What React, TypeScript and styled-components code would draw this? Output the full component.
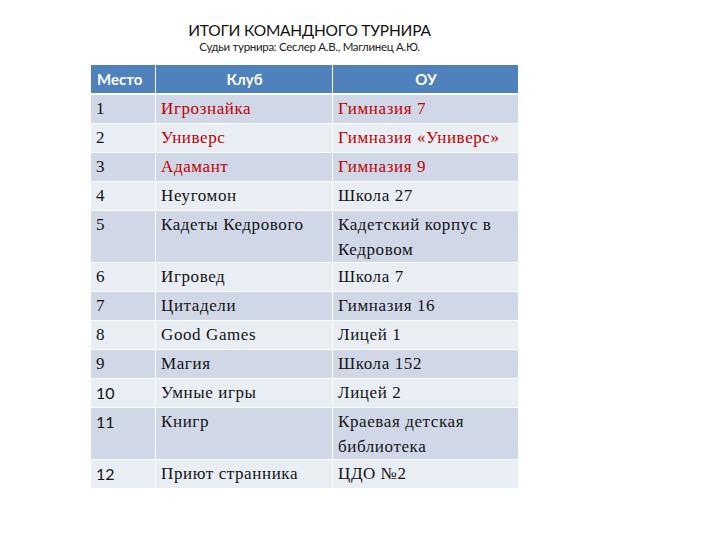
import React from "react";
import styled, { createGlobalStyle } from "styled-components";

const Global = createGlobalStyle`
  html, body { margin: 0; padding: 0; background: #ffffff; }
  body { font-family: "Liberation Serif", serif; }
`;

const Page = styled.div`
  width: 720px;
  height: 540px;
  box-sizing: border-box;
  padding: 20px 0 0 91px;
`;

const Sheet = styled.div`
  width: 427px;
  display: flex;
  flex-direction: column;
`;

const Heading = styled.div`
  display: flex;
  flex-direction: column;
  align-items: center;
  padding-left: 10px;
  margin-bottom: 11px;
`;

const Title = styled.div`
  font-family: Lato, "Open Sans", sans-serif;
  font-size: 15.5px;
  line-height: 20px;
  color: #111;
  letter-spacing: -0.2px;
`;

const Subtitle = styled.div`
  font-family: Lato, "Open Sans", sans-serif;
  font-size: 11.5px;
  line-height: 14px;
  color: #222;
  letter-spacing: -0.3px;
`;

const Table = styled.div`
  display: grid;
  grid-template-columns: 64px 176px 185px;
  row-gap: 1px;
  column-gap: 1px;
  background: #ffffff;
`;

const HeadCell = styled.div<{ $align: "left" | "center" }>`
  background: #4f81bd;
  color: #ffffff;
  font-family: Lato, "Open Sans", sans-serif;
  font-weight: 700;
  font-size: 15px;
  height: 28px;
  line-height: 28px;
  padding: 0 5px 0 6px;
  text-align: ${(p) => p.$align};
  margin-bottom: 1px;
`;

const Cell = styled.div<{ $odd: boolean; $red?: boolean; $sans?: boolean }>`
  background: ${(p) => (p.$odd ? "#d0d8e8" : "#e9edf4")};
  color: ${(p) => (p.$red ? "#c00000" : "#141414")};
  font-family: ${(p) => (p.$sans ? 'Lato, "Open Sans", sans-serif' : '"Liberation Serif", serif')};
  font-size: ${(p) => (p.$sans ? "16px" : "17px")};
  letter-spacing: ${(p) => (p.$sans ? "0" : "0.6px")};
  line-height: 25px;
  min-height: 28px;
  padding: 1px 4px 0 5px;
  box-sizing: border-box;
`;

const rows: [string, string, string][] = [
  ["1", "Игрознайка", "Гимназия 7"],
  ["2", "Универс", "Гимназия «Универс»"],
  ["3", "Адамант", "Гимназия 9"],
  ["4", "Неугомон", "Школа 27"],
  ["5", "Кадеты Кедрового", "Кадетский корпус в Кедровом"],
  ["6", "Игровед", "Школа 7"],
  ["7", "Цитадели", "Гимназия 16"],
  ["8", "Good Games", "Лицей 1"],
  ["9", "Магия", "Школа 152"],
  ["10", "Умные игры", "Лицей 2"],
  ["11", "Книгр", "Краевая детская библиотека"],
  ["12", "Приют странника", "ЦДО №2"],
];

export default function App() {
  return (
    <Page>
      <Global />
      <Sheet>
        <Heading>
          <Title>ИТОГИ КОМАНДНОГО ТУРНИРА</Title>
          <Subtitle>Судьи турнира: Сеслер А.В., Маглинец А.Ю.</Subtitle>
        </Heading>
        <Table>
          <HeadCell $align="left">Место</HeadCell>
          <HeadCell $align="center">Клуб</HeadCell>
          <HeadCell $align="center">ОУ</HeadCell>
          {rows.map(([n, club, school], i) => {
            const odd = i % 2 === 0;
            const red = i < 3;
            const sans = n.length > 1;
            return (
              <React.Fragment key={n}>
                <Cell $odd={odd} $sans={sans}>{n}</Cell>
                <Cell $odd={odd} $red={red}>{club}</Cell>
                <Cell $odd={odd} $red={red}>{school}</Cell>
              </React.Fragment>
            );
          })}
        </Table>
      </Sheet>
    </Page>
  );
}
